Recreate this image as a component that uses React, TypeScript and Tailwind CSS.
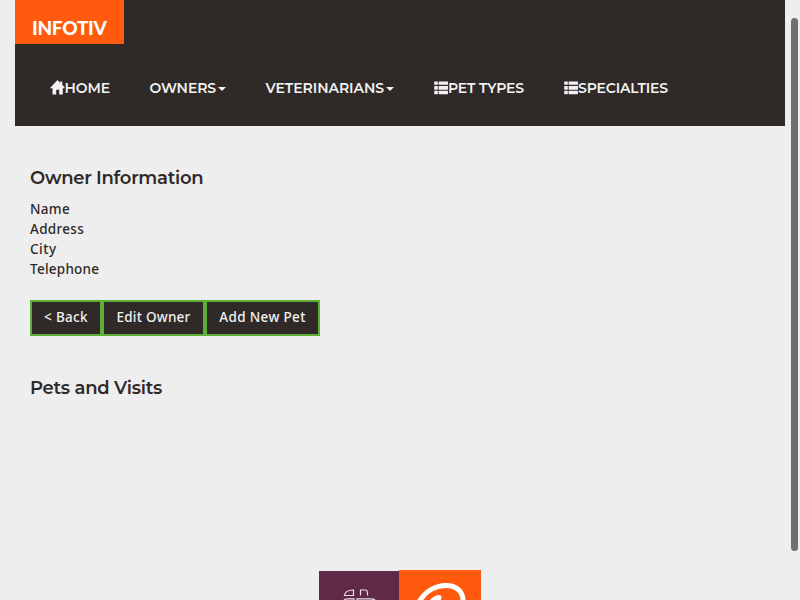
import React from "react";

const font = "font-['Montserrat','Inter','Open_Sans',sans-serif]";

function HomeIcon() {
  return (
    <svg className="-ml-px -mt-px block h-[15px] w-[15px] shrink-0" viewBox="0 0 15 15" fill="#f1f1f1">
      <path d="M7.5 0 L10.3 2.800 V1.400 H12.300 V4.800 L14.500 7.300 V8.300 H12.800 V14.400 H9.200 V9.800 H6.200 V14.400 H2.500 V8.300 H0.300 V7.700 Z" />
    </svg>
  );
}

function ListIcon() {
  return (
    <svg className="block h-[14px] w-[14px] shrink-0" viewBox="0 0 14 14" fill="#f1f1f1">
      <rect x="0.2" y="0.4" width="3.6" height="3.4" rx="0.4" />
      <rect x="4.6" y="0.4" width="9.4" height="3.4" rx="0.4" />
      <rect x="0.2" y="4.9" width="3.6" height="3.8" rx="0.4" />
      <rect x="4.6" y="4.9" width="9.4" height="3.8" rx="0.4" />
      <rect x="0.2" y="9.8" width="3.6" height="3.4" rx="0.4" />
      <rect x="4.6" y="9.8" width="9.4" height="3.4" rx="0.4" />
    </svg>
  );
}

function Caret() {
  return <span className="ml-[2px] mt-[2px] h-0 w-0 border-x-4 border-t-4 border-x-transparent border-t-[#f1f1f1]" />;
}

function Label({ children, className }: { children: string; className: string }) {
  return <span className={"whitespace-nowrap " + className}>{children}</span>;
}

export default function App() {
  return (
    <div className={"flex h-[600px] w-[800px] overflow-hidden bg-[#eeeeee] text-sm text-[#2f2a28] " + font}>
      <div className="flex w-[785px] shrink-0 flex-col pl-[15px]">
        <header className="h-[126px] shrink-0 bg-[#2f2a28]">
          <div className="h-[44px] w-[109px] bg-[#ff5a0d] pl-[17px] pt-[17px] font-['Lato',sans-serif] text-[19px] leading-[21px] font-black text-white">
            <Label className="tracking-[-0.3px]">INFOTIV</Label>
          </div>
          <nav className="mt-[34px] flex h-5 items-center pl-[35.5px] font-semibold leading-5 text-[#f1f1f1]">
            <div className="flex w-[99px] items-center"><HomeIcon /><Label className="tracking-[-0.1px]">HOME</Label></div>
            <div className="flex w-[116px] items-center"><Label className="tracking-[-0.08px]">OWNERS</Label><Caret /></div>
            <div className="flex w-[168.5px] items-center"><Label className="tracking-[-0.04px]">VETERINARIANS</Label><Caret /></div>
            <div className="flex w-[130px] items-center"><ListIcon /><Label className="tracking-[-0.15px]">PET TYPES</Label></div>
            <div className="flex items-center"><ListIcon /><Label className="tracking-[-0.15px]">SPECIALTIES</Label></div>
          </nav>
        </header>
        <main className="flex grow flex-col px-[15px]">
          <h2 className="mt-[42px] h-5 text-lg font-semibold leading-5"><Label className="tracking-[-0.28px]">Owner Information</Label></h2>
          <div className="mt-[11px] flex flex-col font-['Noto_Sans',sans-serif] text-[13.5px] font-medium leading-5">
            <Label className="tracking-[0.3px]">Name</Label>
            <Label className="tracking-[0.3px]">Address</Label>
            <Label className="tracking-[0.5px]">City</Label>
            <Label className="tracking-[0.25px]">Telephone</Label>
          </div>
          <div className="mt-[21px] flex h-9 font-['Noto_Sans',sans-serif] text-[13.5px] font-medium leading-[30px] text-[#f1f1f1]">
            <button className="w-[72px] border-2 border-[#5eaf35] bg-[#2f2a28] pb-[2px]"><Label className="tracking-[0.3px]">&lt; Back</Label></button>
            <button className="w-[103px] border-2 border-[#5eaf35] bg-[#2f2a28] pb-[2px]"><Label className="tracking-[0.25px]">Edit Owner</Label></button>
            <button className="w-[115px] border-2 border-[#5eaf35] bg-[#2f2a28] pb-[2px]"><Label className="tracking-[0.35px]">Add New Pet</Label></button>
          </div>
          <h2 className="mt-[42px] h-5 text-lg font-semibold leading-5"><Label className="tracking-[-0.27px]">Pets and Visits</Label></h2>
          <footer className="mt-auto flex h-[30px] items-end pl-[289px]">
            <svg className="h-[29px] w-20" viewBox="0 0 80 29">
              <rect width="80" height="29" fill="#602948" />
              <g fill="none" stroke="#eadfe6" strokeWidth="1.2">
                <path d="M25.5 24.500 Q26 19 34.500 19 V24.500 Z M41.500 24.500 V19 H46 Q48.500 19 48.500 22 V24.500" />
                <path d="M25 29 Q25.500 27.800 29 27.800 H35 V29 M38 29 V27.800 H51 Q55 27.800 56 29" />
              </g>
            </svg>
            <svg className="h-[30px] w-[82px]" viewBox="0 0 82 30">
              <rect width="82" height="30" fill="#ff5a0d" />
              <path d="M20 32 C26 21.500 36 15.500 47 15.500 C58 15.500 64.500 22 64 32" fill="none" stroke="white" strokeWidth="5" />
              <path d="M30 31 Q35 25 40.500 25 Q44.500 26 41 31" fill="white" />
            </svg>
          </footer>
        </main>
      </div>
      <div className="ml-[6px] mt-[18px] h-[533px] w-[7px] rounded-full bg-[#6f6f6f]" />
    </div>
  );
}
